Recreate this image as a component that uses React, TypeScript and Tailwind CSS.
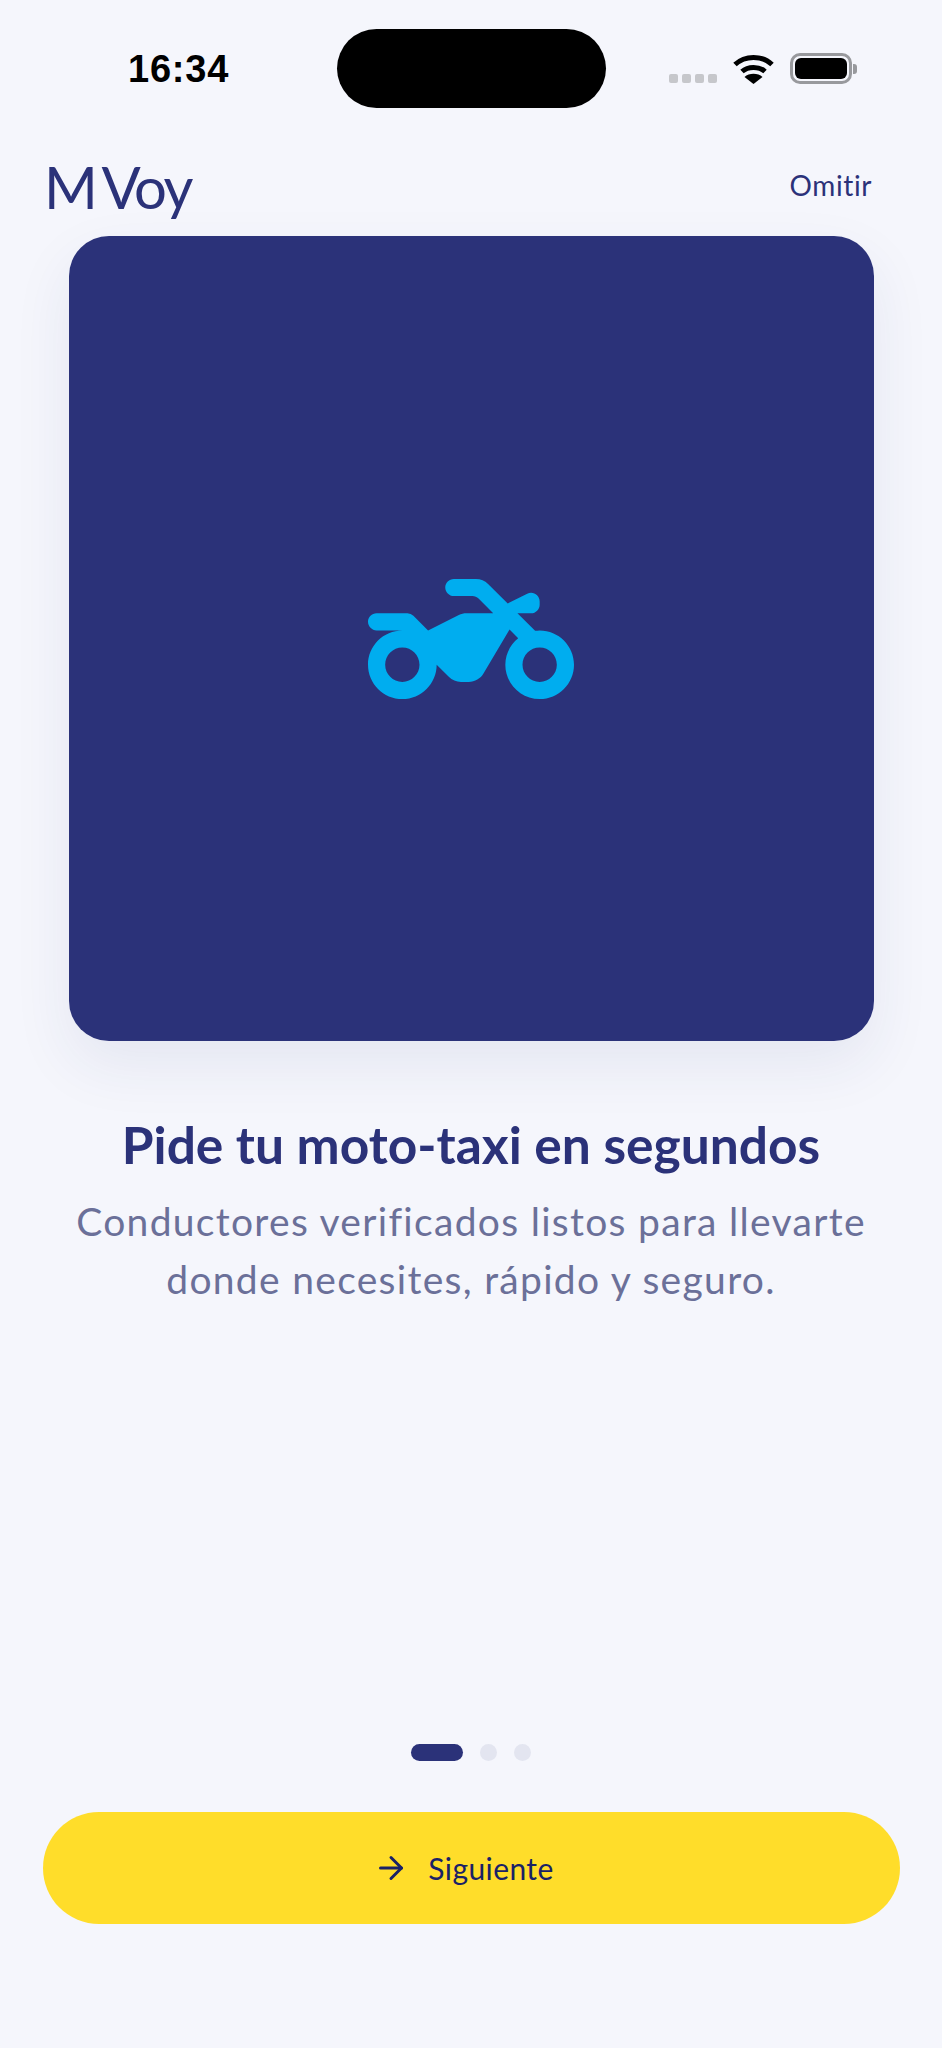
import { ArrowRight } from 'lucide-react';

const motoPath =
  'M20 11c-.18 0-.36.03-.53.05L17.41 9H19c.55 0 1-.45 1-1v-.38c0-.74-.78-1.23-1.45-.89l-2.27 1.13-2.29-2.27A2 2 0 0 0 12.58 5H10c-.55 0-1 .45-1 1s.45 1 1 1h2.17c.27 0 .52.11.71.29L14.59 9h-3.12c-.31 0-.62.07-.89.21L7 11 5.29 9.29A1 1 0 0 0 4.59 9H1c-.55 0-1 .45-1 1s.45 1 1 1h3c-2.21 0-4 1.79-4 4s1.79 4 4 4 4-1.79 4-4l1.41 1.41c.38.38.89.59 1.42.59h.9c.72 0 1.38-.38 1.74-1.01l3.02-5.09 1.01 1.01c-.91.73-1.5 1.84-1.5 3.09 0 2.21 1.79 4 4 4s4-1.79 4-4-1.79-4-4-4zM4 17c-1.1 0-2-.9-2-2s.9-2 2-2 2 .9 2 2-.9 2-2 2zm16 0c-1.1 0-2-.9-2-2s.9-2 2-2 2 .9 2 2-.9 2-2 2z';

function StatusBar() {
  return (
    <div className="flex items-start pt-[29px] h-[108px] box-content">
      <div className="w-[337px] pl-[128px] pt-[18px] text-[38px] leading-[44px] font-semibold tracking-[0.8px] text-black font-['Liberation_Sans',sans-serif]">
        16:34
      </div>
      <div className="w-[269px] h-[79px] rounded-[40px] bg-black" />
      <div className="flex items-start pl-[63px]">
        <div className="flex gap-[4px] pt-[45px]">
          <div className="w-[9px] h-[9px] rounded-[2px] bg-[#c6c7cb]" />
          <div className="w-[9px] h-[9px] rounded-[2px] bg-[#c6c7cb]" />
          <div className="w-[9px] h-[9px] rounded-[2px] bg-[#c6c7cb]" />
          <div className="w-[9px] h-[9px] rounded-[2px] bg-[#c6c7cb]" />
        </div>
        <svg width="41" height="31" viewBox="0 0 41 31" className="ml-[16px] mt-[24px]">
          <path d="M2 11.5C12 2 29 2 39 11.5" fill="none" stroke="#000" strokeWidth="5" />
          <path d="M9 18.5C15 13 26 13 32 18.5" fill="none" stroke="#000" strokeWidth="5" />
          <path d="M20.5 31 L11.5 24 C16 19.8 25 19.8 29.5 24 Z" fill="#000" />
        </svg>
        <div className="flex items-center ml-[16px] mt-[24px]">
          <div className="w-[62px] h-[31px] rounded-[10px] border-[3px] border-[#98999d] p-[2px]">
            <div className="w-full h-full rounded-[6px] bg-black" />
          </div>
          <div className="w-[4px] h-[10px] ml-[1px] rounded-r-[3px] bg-[#98999d]" />
        </div>
      </div>
    </div>
  );
}

export default function App() {
  return (
    <div className="w-[942px] h-[2048px] flex flex-col bg-[#f5f6fc] overflow-hidden [font-variant-ligatures:none]">
      <StatusBar />

      {/* Header */}
      <div className="flex items-center justify-between h-[99px] pl-[44px] pr-[70px]">
        <span className="text-[58px] leading-none tracking-[-2.5px] [word-spacing:-4px] text-[#2b3279] font-['Lato',sans-serif]">
          M Voy
        </span>
        <span className="mb-[4px] text-[28px] leading-none tracking-[0.6px] text-[#2b3279] font-['Lato',sans-serif]">
          Omitir
        </span>
      </div>

      {/* Card */}
      <div className="self-center w-[805px] h-[805px] rounded-[40px] bg-[#2b3279] flex items-center justify-center shadow-[0_24px_60px_rgba(43,50,121,0.08)]">
        <svg width="206" height="206" viewBox="0 0 24 24" fill="#00adef">
          <path fillRule="evenodd" d={motoPath} />
        </svg>
      </div>

      {/* Copy */}
      <div className="flex flex-col items-center mt-[73px]">
        <h1 className="text-[51.5px] leading-[60px] font-bold text-[#2b3279] font-['Lato',sans-serif]">
          Pide tu moto-taxi en segundos
        </h1>
        <p className="mt-[18px] text-center text-[39px] leading-[58px] tracking-[1.3px] text-[#6b7099] font-['Lato',sans-serif]">
          Conductores verificados listos para llevarte
          <br />
          donde necesites, rápido y seguro.
        </p>
      </div>

      <div className="flex-1" />

      {/* Pager */}
      <div className="flex justify-center gap-[17px]">
        <div className="w-[52px] h-[17px] rounded-full bg-[#2b3279]" />
        <div className="w-[17px] h-[17px] rounded-full bg-[#e3e5f0]" />
        <div className="w-[17px] h-[17px] rounded-full bg-[#e3e5f0]" />
      </div>

      {/* Button */}
      <div className="mt-[51px] mb-[124px] ml-[43px] mr-[42px] h-[112px] pr-[16px] rounded-[56px] bg-[#ffdd2a] flex items-center justify-center gap-[19px]">
        <ArrowRight size={36} strokeWidth={2} color="#1a2266" />
        <span className="text-[30px] leading-none tracking-[0.4px] text-[#1a2266] font-['Lato',sans-serif]">
          Siguiente
        </span>
      </div>
    </div>
  );
}
